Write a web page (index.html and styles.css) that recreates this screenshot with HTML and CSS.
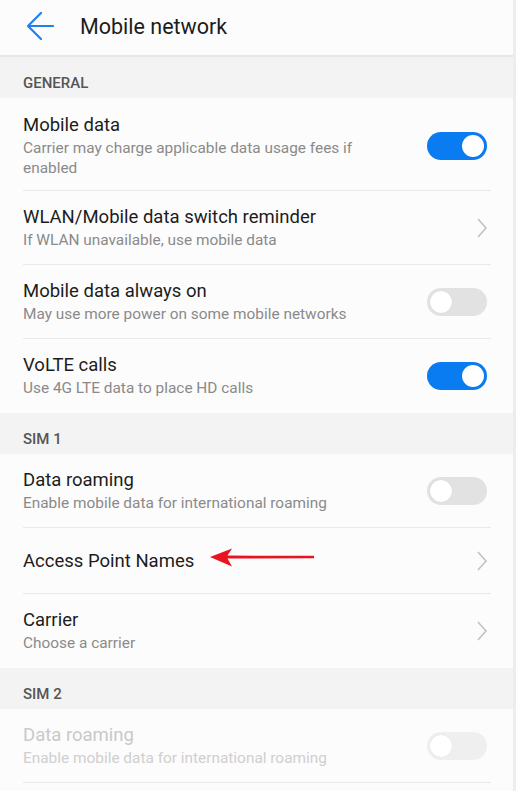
FILE: index.html
```html
<!DOCTYPE html>
<html>
<head>
<meta charset="utf-8">
<link rel="stylesheet" href="styles.css">
</head>
<body>
<div class="screen">
  <header class="topbar">
    <svg class="back" width="28" height="30" viewBox="0 0 28 30"><path d="M2 14 H27 M15 1 L2 14 L15 27" fill="none" stroke="#1f80f0" stroke-width="2.2" stroke-linecap="round" stroke-linejoin="round"/></svg>
    <h1 class="title">Mobile network</h1>
  </header>

  <div class="section">GENERAL</div>
  <div class="group">
    <div class="row tall">
      <div class="text">
        <div class="label">Mobile data</div>
        <div class="sub">Carrier may charge applicable data usage fees if enabled</div>
      </div>
      <span class="toggle on"><span class="knob"></span></span>
    </div>
    <div class="row">
      <div class="text">
        <div class="label">WLAN/Mobile data switch reminder</div>
        <div class="sub">If WLAN unavailable, use mobile data</div>
      </div>
      <svg class="chev" width="12" height="20" viewBox="0 0 12 20"><path d="M2 1 L10 10 L2 19" fill="none" stroke="#c2c2c2" stroke-width="1.6"/></svg>
    </div>
    <div class="row">
      <div class="text">
        <div class="label">Mobile data always on</div>
        <div class="sub">May use more power on some mobile networks</div>
      </div>
      <span class="toggle"><span class="knob"></span></span>
    </div>
    <div class="row last">
      <div class="text">
        <div class="label">VoLTE calls</div>
        <div class="sub">Use 4G LTE data to place HD calls</div>
      </div>
      <span class="toggle on"><span class="knob"></span></span>
    </div>
  </div>

  <div class="section">SIM 1</div>
  <div class="group">
    <div class="row">
      <div class="text">
        <div class="label">Data roaming</div>
        <div class="sub">Enable mobile data for international roaming</div>
      </div>
      <span class="toggle"><span class="knob"></span></span>
    </div>
    <div class="row single">
      <div class="text">
        <div class="label">Access Point Names</div>
      </div>
      <svg class="chev" width="12" height="20" viewBox="0 0 12 20"><path d="M2 1 L10 10 L2 19" fill="none" stroke="#c2c2c2" stroke-width="1.6"/></svg>
      <svg class="pointer" width="106" height="22" viewBox="0 0 106 22"><path d="M0 10 L22 1.5 L17.5 8.6 L104 8.8 L104 11.2 L17.5 11.6 L22 19.5 Z" fill="#e8141f"/></svg>
    </div>
    <div class="row last">
      <div class="text">
        <div class="label">Carrier</div>
        <div class="sub">Choose a carrier</div>
      </div>
      <svg class="chev" width="12" height="20" viewBox="0 0 12 20"><path d="M2 1 L10 10 L2 19" fill="none" stroke="#c2c2c2" stroke-width="1.6"/></svg>
    </div>
  </div>

  <div class="section">SIM 2</div>
  <div class="group">
    <div class="row disabled">
      <div class="text">
        <div class="label">Data roaming</div>
        <div class="sub">Enable mobile data for international roaming</div>
      </div>
      <span class="toggle"><span class="knob"></span></span>
    </div>
  </div>
</div>
</body>
</html>
```
FILE: styles.css
```css
* { box-sizing: border-box; }
html, body { margin: 0; padding: 0; }
body {
  background: #fcfcfc;
  font-family: Roboto, "Noto Sans", "Liberation Sans", sans-serif;
  overflow: hidden;
}
.screen {
  width: 516px;
  min-height: 791px;
  background: #fcfcfc;
  border-right: 3px solid #ededed;
}
.topbar {
  height: 57px;
  display: flex;
  align-items: center;
  padding-left: 26px;
  padding-bottom: 2px;
  background: #fcfcfc;
  border-bottom: 2px solid #e6e6e6;
}
.back { display: block; }
.title {
  margin: 0 0 0 26px;
  font-size: 21.5px;
  font-weight: 400;
  color: #1c1c1c;
}
.section {
  height: 41px;
  background: #f3f3f3;
  padding: 16px 0 0 23px;
  font-size: 15px;
  line-height: 20px;
  font-weight: 500;
  color: #555555;
}
.group { background: #fcfcfc; }
.row {
  position: relative;
  margin: 0 22px 0 23px;
  min-height: 74px;
  display: flex;
  align-items: center;
  border-bottom: 1px solid #e9e9e9;
  padding-right: 4px;
}
.row.tall { min-height: 93px; padding-top: 3px; }
.row.single { min-height: 66px; }
.row.last { border-bottom: none; }
.text { flex: 1; padding-right: 60px; }
.label {
  font-size: 18.5px;
  line-height: 24px;
  color: #1c1c1c;
}
.sub {
  font-size: 15.4px;
  line-height: 19.5px;
  color: #8a8a8a;
  margin-top: 2px;
}
.disabled .label { color: #c9c9c9; }
.disabled .sub { color: #cfcfcf; }
.toggle {
  flex: none;
  width: 60px;
  height: 28px;
  border-radius: 14px;
  background: #e2e2e2;
  display: flex;
  align-items: center;
  padding: 0 3px;
}
.toggle .knob {
  width: 22px;
  height: 22px;
  border-radius: 50%;
  background: #ffffff;
  box-shadow: 0 0 1px rgba(0,0,0,0.15);
}
.toggle.on { background: #0a7cf2; justify-content: flex-end; }
.disabled .toggle { background: #efefef; }
.chev { flex: none; display: block; margin-right: -1px; }
.pointer {
  position: absolute;
  left: 187px;
  top: 19px;
}
```
